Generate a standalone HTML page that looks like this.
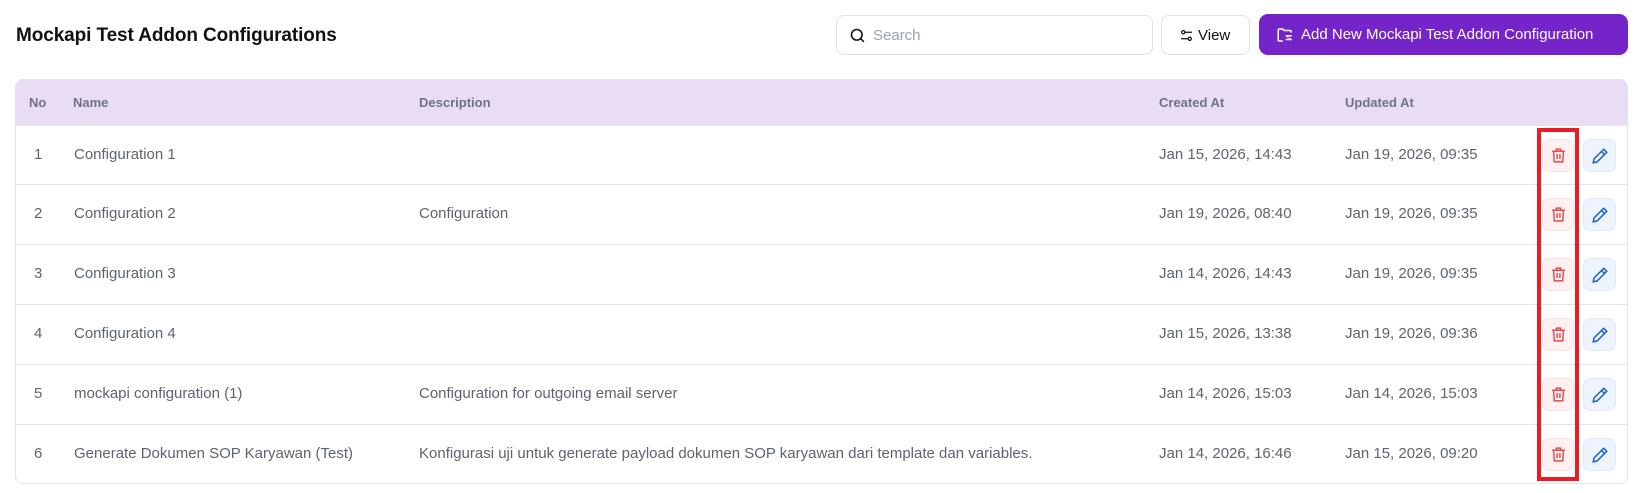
<!DOCTYPE html>
<html><head><meta charset="utf-8"><style>
*{box-sizing:border-box;margin:0;padding:0}
body{width:1647px;height:493px;background:#fff;font-family:"Liberation Sans",sans-serif;position:relative;overflow:hidden}
.abs{position:absolute}
h1{position:absolute;left:16px;top:25px;font-size:19px;font-weight:bold;color:#111;letter-spacing:-0.1px}
.search{left:836px;top:15px;width:317px;height:40px;border:1px solid #e2e2e6;border-radius:8px}
.search span{position:absolute;left:36px;top:11px;font-size:15px;color:#9ca3af}
.view{left:1161px;top:15px;width:89px;height:40px;border:1px solid #e2e2e6;border-radius:8px;font-size:15px;color:#111}
.add{left:1259px;top:14px;width:369px;height:41px;background:#7424c8;border-radius:9px;color:#fff;font-size:15px}
.table{left:15px;top:79px;width:1613px;height:405px;border:1px solid #e4e4e8;border-radius:8px;overflow:hidden}
.hdr{position:absolute;left:0;top:0;width:100%;height:45px;background:#e9dcf5}
.hdr div{position:absolute;top:15px;font-size:13px;font-weight:bold;color:#707380}
.row{position:absolute;left:0;width:100%;height:60px;border-top:1px solid #e6e6e9}
.row div.t{position:absolute;top:20px;font-size:15px;color:#5e6370;white-space:nowrap}
.del{position:absolute;left:1526px;top:13px;width:32px;height:33px;background:#fdf0f0;border:1px solid #f6e4e4;border-radius:7px}
.edt{position:absolute;left:1567px;top:13px;width:33px;height:33px;background:#eef4fd;border:1px solid #e2eaf5;border-radius:7px}
.del svg,.edt svg{position:absolute;left:7px;top:7px}
.red{left:1537px;top:128px;width:42px;height:353px;border:4px solid #e81c24}
</style></head><body>
<h1>Mockapi Test Addon Configurations</h1>
<div class="abs search"><svg class="abs" style="left:12px;top:11px" width="17" height="17" viewBox="0 0 24 24" fill="none" stroke="#111" stroke-width="2.2"><circle cx="11" cy="11" r="7.5"/><path d="M16.5 16.5L21 21"/></svg><span>Search</span></div>
<div class="abs view"><svg class="abs" style="left:18px;top:13px" width="13" height="13" viewBox="0 0 24 24" fill="none" stroke="#111" stroke-width="2.2"><circle cx="6" cy="6" r="3"/><path d="M9 6h13M2 18h13"/><circle cx="18" cy="18" r="3"/></svg><span class="abs" style="left:36px;top:11px">View</span></div>
<div class="abs add"><svg class="abs" style="left:17px;top:12px" width="18" height="18" viewBox="0 0 24 24" fill="none" stroke="#fff" stroke-width="2"><path d="M9 20H4a1 1 0 0 1-1-1V5a1 1 0 0 1 1-1h5l2 2h8a1 1 0 0 1 1 1v2"/><path d="M13 13h8M17 13l-2 2M13 18h8M17 18l2-2"/></svg><span class="abs" style="left:42px;top:12px">Add New Mockapi Test Addon Configuration</span></div>
<div class="abs table">
<div class="hdr"><div style="left:13px">No</div><div style="left:57px">Name</div><div style="left:403px">Description</div><div style="left:1143px">Created At</div><div style="left:1329px">Updated At</div></div>
<div class="row" style="top:45px"><div class="t" style="left:18px">1</div><div class="t" style="left:58px">Configuration 1</div><div class="t" style="left:403px"></div><div class="t" style="left:1143px">Jan 15, 2026, 14:43</div><div class="t" style="left:1329px">Jan 19, 2026, 09:35</div><div class="del"></div><div class="edt"></div></div>
<div class="row" style="top:104px"><div class="t" style="left:18px">2</div><div class="t" style="left:58px">Configuration 2</div><div class="t" style="left:403px">Configuration</div><div class="t" style="left:1143px">Jan 19, 2026, 08:40</div><div class="t" style="left:1329px">Jan 19, 2026, 09:35</div><div class="del"></div><div class="edt"></div></div>
<div class="row" style="top:164px"><div class="t" style="left:18px">3</div><div class="t" style="left:58px">Configuration 3</div><div class="t" style="left:403px"></div><div class="t" style="left:1143px">Jan 14, 2026, 14:43</div><div class="t" style="left:1329px">Jan 19, 2026, 09:35</div><div class="del"></div><div class="edt"></div></div>
<div class="row" style="top:224px"><div class="t" style="left:18px">4</div><div class="t" style="left:58px">Configuration 4</div><div class="t" style="left:403px"></div><div class="t" style="left:1143px">Jan 15, 2026, 13:38</div><div class="t" style="left:1329px">Jan 19, 2026, 09:36</div><div class="del"></div><div class="edt"></div></div>
<div class="row" style="top:284px"><div class="t" style="left:18px">5</div><div class="t" style="left:58px">mockapi configuration (1)</div><div class="t" style="left:403px">Configuration for outgoing email server</div><div class="t" style="left:1143px">Jan 14, 2026, 15:03</div><div class="t" style="left:1329px">Jan 14, 2026, 15:03</div><div class="del"></div><div class="edt"></div></div>
<div class="row" style="top:344px"><div class="t" style="left:18px">6</div><div class="t" style="left:58px">Generate Dokumen SOP Karyawan (Test)</div><div class="t" style="left:403px">Konfigurasi uji untuk generate payload dokumen SOP karyawan dari template dan variables.</div><div class="t" style="left:1143px">Jan 14, 2026, 16:46</div><div class="t" style="left:1329px">Jan 15, 2026, 09:20</div><div class="del"></div><div class="edt"></div></div>
</div>
<div class="abs red"></div>
<script>
document.querySelectorAll('.del').forEach(e=>e.innerHTML='<svg width="17" height="17" viewBox="0 0 24 24" fill="none" stroke="#e5484d" stroke-width="2"><path d="M3 6h18M9 6V3h6v3M5 6l1 15h12l1-15M10 10v7M14 10v7"/></svg>');
document.querySelectorAll('.edt').forEach(e=>e.innerHTML='<svg width="18" height="18" viewBox="0 0 24 24" fill="none" stroke="#1d5fc9" stroke-width="2"><path d="M17 3l4 4L8 20l-5 1 1-5z M14 6l4 4"/></svg>');
</script>
</body></html>
